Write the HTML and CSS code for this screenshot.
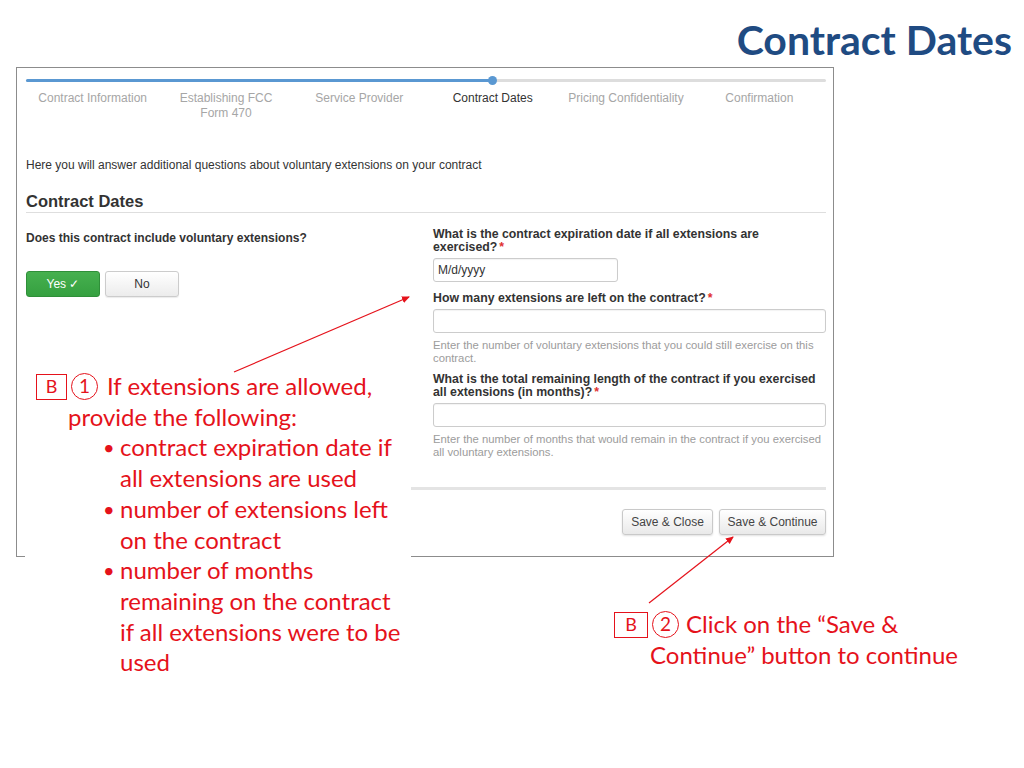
FILE: index.html
```html
<!DOCTYPE html>
<html lang="en">
<head>
<meta charset="utf-8">
<title>Contract Dates</title>
<link rel="stylesheet" href="styles.css">
</head>
<body>
<div class="slide">
  <h1 class="slide-title">Contract Dates</h1>

  <div class="panel">
    <div class="track"><div class="track-fill"></div><div class="track-dot"></div></div>
    <div class="steps">
      <div class="step">Contract Information</div>
      <div class="step">Establishing FCC<br>Form 470</div>
      <div class="step">Service Provider</div>
      <div class="step active">Contract Dates</div>
      <div class="step">Pricing Confidentiality</div>
      <div class="step">Confirmation</div>
    </div>
    <p class="intro">Here you will answer additional questions about voluntary extensions on your contract</p>
    <h2 class="section-title">Contract Dates</h2>
    <div class="form-grid">
      <div class="col-left">
        <div class="question">Does this contract include voluntary extensions?</div>
        <div class="toggle">
          <span class="btn btn-yes">Yes ✓</span>
          <span class="btn btn-no">No</span>
        </div>
      </div>
      <div class="col-right">
        <div class="label">What is the contract expiration date if all extensions are<br>exercised?<span class="req">*</span></div>
        <div class="input input-date">M/d/yyyy</div>
        <div class="label single">How many extensions are left on the contract?<span class="req">*</span></div>
        <div class="input"></div>
        <div class="help">Enter the number of voluntary extensions that you could still exercise on this<br>contract.</div>
        <div class="label l3">What is the total remaining length of the contract if you exercised<br>all extensions (in months)?<span class="req">*</span></div>
        <div class="input"></div>
        <div class="help">Enter the number of months that would remain in the contract if you exercised<br>all voluntary extensions.</div>
      </div>
    </div>
    <div class="separator"></div>
    <div class="actions">
      <span class="btn btn-plain btn-close">Save &amp; Close</span>
      <span class="btn btn-plain btn-continue">Save &amp; Continue</span>
    </div>
  </div>

  <div class="note note1">
    <p class="lead"><span class="tag">B</span><span class="circ">1</span><span class="lead-text">If extensions are allowed,<br>provide the following:</span></p>
    <ul class="bullets">
      <li>contract expiration date if<br>all extensions are used</li>
      <li>number of extensions left<br>on the contract</li>
      <li>number of months<br>remaining on the contract<br>if all extensions were to be<br>used</li>
    </ul>
  </div>

  <div class="note note2">
    <p class="lead"><span class="tag">B</span><span class="circ">2</span><span class="lead-text">Click on the “Save &amp;<br>Continue” button to continue</span></p>
  </div>

  <svg class="arrows" width="1024" height="768" viewBox="0 0 1024 768">
    <defs>
      <marker id="ah" markerWidth="8" markerHeight="8" refX="7" refY="4" orient="auto" markerUnits="userSpaceOnUse">
        <path d="M0,0.5 L8,4 L0,7.5 Z" fill="#e5121b"/>
      </marker>
    </defs>
    <line x1="234" y1="372" x2="409" y2="297" stroke="#e5121b" stroke-width="1.2" marker-end="url(#ah)"/>
    <line x1="649" y1="603" x2="733" y2="537" stroke="#e5121b" stroke-width="1.2" marker-end="url(#ah)"/>
  </svg>
</div>
</body>
</html>
```

FILE: styles.css
```css
html, body {
  margin: 0;
  padding: 0;
  background: #ffffff;
}

.slide {
  position: relative;
  width: 1024px;
  height: 768px;
  overflow: hidden;
  background: #ffffff;
}

.slide-title {
  position: absolute;
  right: 12px;
  top: 15px;
  margin: 0;
  font-family: "Lato", "Liberation Sans", sans-serif;
  font-weight: 700;
  font-size: 41px;
  line-height: 50px;
  color: #1f4b82;
}

/* ---------- screenshot panel ---------- */
.panel {
  position: absolute;
  left: 16px;
  top: 67px;
  width: 818px;
  height: 490px;
  box-sizing: border-box;
  border: 1px solid #8c8c8c;
  padding: 11px 7px 0 9px;
  font-family: "Liberation Sans", Arial, sans-serif;
  color: #333333;
  background: #ffffff;
}

.track {
  position: relative;
  height: 3px;
  background: #dddddd;
  border-radius: 2px;
}
.track-fill {
  width: 466px;
  height: 3px;
  background: #5a98d2;
  border-radius: 2px;
}
.track-dot {
  position: absolute;
  left: 462px;
  top: -3px;
  width: 9px;
  height: 9px;
  border-radius: 50%;
  background: #5a98d2;
}

.steps {
  display: grid;
  grid-template-columns: repeat(6, 1fr);
  margin-top: 9px;
}
.step {
  text-align: center;
  font-size: 12px;
  line-height: 15px;
  color: #a6a6a6;
}
.step.active {
  color: #333333;
}

.intro {
  margin: 37px 0 0;
  font-size: 12px;
  line-height: 15px;
  color: #333333;
}

.section-title {
  margin: 18px 0 0;
  padding-bottom: 1px;
  font-size: 16.5px;
  line-height: 20px;
  font-weight: 700;
  color: #333333;
  border-bottom: 1px solid #dedede;
}

.form-grid {
  display: grid;
  grid-template-columns: 407px 393px;
  margin-top: 15px;
}

.question {
  margin-top: 3px;
  font-size: 12px;
  line-height: 14px;
  font-weight: 700;
  color: #333333;
}

.toggle {
  display: flex;
  gap: 5px;
  margin-top: 26px;
}

.btn {
  display: inline-flex;
  align-items: center;
  justify-content: center;
  box-sizing: border-box;
  height: 26px;
  font-size: 12px;
  border-radius: 3px;
}
.btn-yes {
  width: 74px;
  color: #ffffff;
  background: linear-gradient(#46b04f, #35a040);
  border: 1px solid #2f8f39;
}
.btn-no {
  width: 74px;
  color: #333333;
  background: linear-gradient(#ffffff, #ececec);
  border: 1px solid #cccccc;
  box-shadow: 0 1px 1px rgba(0,0,0,0.08);
}

.label {
  font-size: 12.3px;
  line-height: 13px;
  font-weight: 700;
  color: #333333;
  white-space: nowrap;
}
.label.single {
  margin-top: 10px;
}
.label.l3 {
  margin-top: 8px;
}
.req {
  color: #e03030;
  margin-left: 2px;
}

.input {
  box-sizing: border-box;
  height: 24px;
  margin-top: 4px;
  border: 1px solid #cccccc;
  border-radius: 3px;
  padding: 0 4px;
  font-size: 12px;
  line-height: 22px;
  color: #333333;
  box-shadow: inset 0 1px 1px rgba(0,0,0,0.05);
}
.input-date {
  width: 185px;
}

.help {
  margin-top: 6px;
  font-size: 11.3px;
  line-height: 13px;
  color: #9c9c9c;
  white-space: nowrap;
}

.separator {
  margin-top: 28px;
  height: 3px;
  background: #e4e4e4;
}

.actions {
  display: flex;
  justify-content: flex-end;
  gap: 6px;
  margin-top: 19px;
}
.btn-plain {
  color: #444444;
  background: linear-gradient(#ffffff, #e9e9e9);
  border: 1px solid #c9c9c9;
  box-shadow: 0 1px 2px rgba(0,0,0,0.12);
}
.btn-close {
  width: 91px;
}
.btn-continue {
  width: 107px;
}

/* ---------- annotations ---------- */
.note {
  position: absolute;
  font-family: "Lato", "Liberation Sans", sans-serif;
  font-size: 24px;
  line-height: 30.7px;
  color: #e5121b;
  background: #ffffff;
  white-space: nowrap;
}
.note p {
  margin: 0;
}
.note1 {
  left: 25px;
  top: 371px;
  width: 386px;
  height: 320px;
  box-sizing: border-box;
}
.note1 .lead {
  padding-left: 43px;
  text-indent: -32px;
}
.tag {
  display: inline-block;
  text-indent: 0;
  box-sizing: border-box;
  width: 31px;
  height: 26px;
  margin-top: 3px;
  border: 1.5px solid #e5121b;
  font-size: 18px;
  line-height: 23px;
  text-align: center;
  vertical-align: top;
}
.circ {
  display: inline-block;
  text-indent: 0;
  box-sizing: border-box;
  width: 27px;
  height: 27px;
  margin-top: 2px;
  margin-left: 4px;
  margin-right: 9px;
  border: 1.5px solid #e5121b;
  border-radius: 50%;
  font-size: 19px;
  line-height: 24px;
  text-align: center;
  vertical-align: top;
}
.lead-text {
  text-indent: 0;
}

.bullets {
  margin: 0;
  padding: 0 0 0 95px;
  list-style: none;
}
.bullets li {
  position: relative;
}
.bullets li::before {
  content: "•";
  position: absolute;
  left: -17px;
  top: 0;
  font-size: 20px;
}

.note2 {
  left: 614px;
  top: 609px;
  background: transparent;
}
.note2 .lead {
  padding-left: 36px;
  text-indent: -36px;
}
.note2 .tag {
  width: 34px;
}
.note2 .circ {
  margin-left: 4px;
  margin-right: 7px;
}

.arrows {
  position: absolute;
  left: 0;
  top: 0;
  pointer-events: none;
}
```
